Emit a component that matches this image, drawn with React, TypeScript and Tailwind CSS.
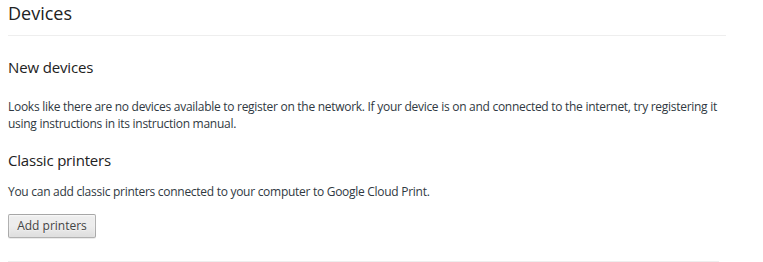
// Devices settings page
export default function App() {
  return (
    <div className="min-h-[262px] bg-white px-2 text-[#303942] [font-family:'Open_Sans',sans-serif]">
      {/* Page header */}
      <div className="h-[36px] w-[718px] border-b border-[#eeeeee]">
        <h1 className="text-[18px] leading-[26px] text-[#222]">Devices</h1>
      </div>

      {/* New devices */}
      <section className="w-[718px]">
        <h3 className="mt-[21px] text-[15px] leading-[20px] tracking-[-0.15px] text-[#222]">New devices</h3>
        <p className="mt-[21px] text-[12px] leading-[17px] tracking-[-0.28px]">
          Looks like there are no devices available to register on the network. If your device is on and connected
          to the internet, try registering it using instructions in its instruction manual.
        </p>
      </section>

      {/* Classic printers */}
      <section className="w-[718px]">
        <h3 className="mt-[18px] text-[15px] leading-[20px] tracking-[-0.2px] text-[#222]">Classic printers</h3>
        <p className="mt-[13px] text-[12px] leading-[17px] tracking-[-0.28px]">
          You can add classic printers connected to your computer to Google Cloud Print.
        </p>
        <button
          type="button"
          className="mt-[14px] flex h-[24px] w-[88px] items-center justify-center rounded-[2px] border border-black/25 bg-gradient-to-b from-[#ededed] via-[#ededed] to-[#dedede] text-[12px] text-[#444] shadow-[0_1px_0_rgba(0,0,0,0.08),inset_0_1px_2px_rgba(255,255,255,0.75)] [text-shadow:0_1px_0_#f0f0f0]"
        >
          Add printers
        </button>
      </section>

      <div className="mt-[23px] h-px w-[711px] bg-[#eeeeee]" />
    </div>
  );
}
